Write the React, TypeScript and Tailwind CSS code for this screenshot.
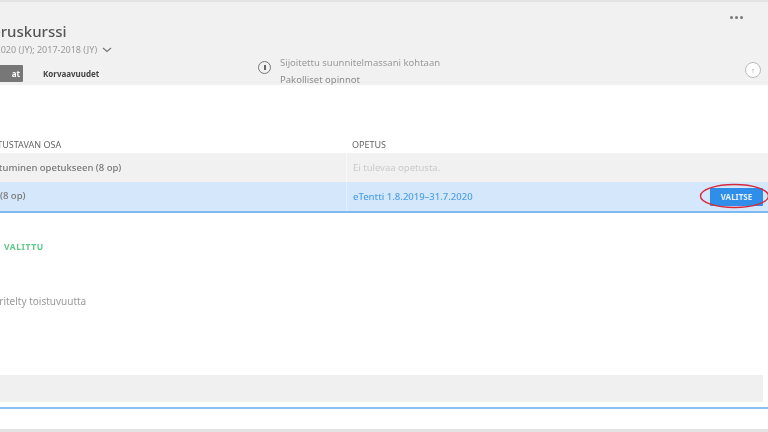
export default function App() {
  return (
    <div className="w-[768px] h-[432px] overflow-hidden bg-white font-['Noto_Sans',sans-serif] blur-[0.5px]">
      <div className="h-[2px] bg-[#e3e3e3]" />

      {/* course header */}
      <div className="h-[83px] bg-[#f1f1f1] flex overflow-hidden">
        <div className="w-[258px] shrink-0 overflow-hidden pt-[19px]">
          <div className="ml-[-17px] text-[15px] leading-[20px] font-medium text-[#555] whitespace-nowrap">Peruskurssi</div>
          <div className="ml-[-28px] mt-[2px] flex items-center gap-[5px] text-[9px] leading-[14px] text-[#9a9a9a] whitespace-nowrap">
            2019-2020 (JY); 2017-2018 (JY)
            <svg width="10" height="6" viewBox="0 0 10 6" fill="none" stroke="#777" strokeWidth="1.2">
              <path d="M1 1l4 3.5L9 1" />
            </svg>
          </div>
          <div className="mt-[8px] flex items-end">
            <div className="w-[23px] h-[17px] bg-[#777] rounded-r-[1px] pr-[3px] text-right text-[8px] leading-[17px] font-bold text-white">at</div>
            <div className="ml-[20px] h-[17px] text-[8px] leading-[17px] font-bold text-[#444] whitespace-nowrap">Korvaavuudet</div>
          </div>
        </div>

        <div className="w-[22px] shrink-0 pt-[59px]">
          <div className="w-[13px] h-[13px] rounded-full border border-[#777] flex items-center justify-center">
            <div className="w-[2px] h-[5px] bg-[#666]" />
          </div>
        </div>

        <div className="flex-1 pt-[54px] text-[9.5px] leading-[14px] text-[#9a9a9a] whitespace-nowrap">
          <div>Sijoitettu suunnitelmassani kohtaan</div>
          <div className="mt-[3px] w-fit border-b border-[#7db4e6] text-[#8c8c8c]">Pakolliset opinnot</div>
        </div>

        <div className="w-[38px] shrink-0 flex flex-col items-start">
          <div className="mt-[14px] flex gap-[2px]">
            <div className="w-[3px] h-[3px] rounded-full bg-[#777]" />
            <div className="w-[3px] h-[3px] rounded-full bg-[#777]" />
            <div className="w-[3px] h-[3px] rounded-full bg-[#777]" />
          </div>
          <div className="mt-[43px] ml-[15px] w-[16px] h-[16px] rounded-full bg-white border border-[#bbb] flex items-center justify-center text-[7px] leading-none text-[#888]">↑</div>
        </div>
      </div>

      {/* table */}
      <div className="mt-[52px] grid grid-cols-[347px_1fr] h-[16px] text-[9px] leading-[16px] text-[#666]">
        <div className="overflow-hidden whitespace-nowrap"><span className="ml-[-31px] block">TOTEUTUSTAVAN OSA</span></div>
        <div className="pl-[5px]">OPETUS</div>
      </div>
      <div className="grid grid-cols-[347px_1fr] h-[29px] bg-[#f1f1f1] text-[9.5px] leading-[29px]">
        <div className="overflow-hidden whitespace-nowrap border-r border-[#f8f8f8] font-medium text-[#777]"><span className="ml-[-31px] block">Osallistuminen opetukseen (8 op)</span></div>
        <div className="pl-[6px] text-[#c9c9c9]">Ei tulevaa opetusta.</div>
      </div>
      <div className="relative h-[31px] bg-[#d5e7fa] border-b-2 border-[#7fb9f2] grid grid-cols-[347px_1fr] text-[9.5px] leading-[28px]">
        <div className="overflow-hidden whitespace-nowrap border-r border-[#e4effb] font-medium text-[#777]">(8 op)</div>
        <div className="pl-[6px] pr-[5px] flex items-center justify-between font-medium text-[#4d9fe8]">
          <span>eTentti 1.8.2019–31.7.2020</span>
          <div className="w-[53px] h-[18px] bg-[#2f8eea] rounded-[1px] text-center text-[8px] leading-[18px] font-bold text-[#e3f0fc]">VALITSE</div>
        </div>
        {/* red marking over the button */}
        <svg className="absolute left-[698px] top-[0px]" width="70" height="29" viewBox="0 0 70 29" fill="none" stroke="#d8283a" strokeWidth="1.4">
          <ellipse cx="36.5" cy="14" rx="34" ry="11.5" />
        </svg>
      </div>

      {/* details */}
      <div className="mt-[27px] pl-[4px] text-[8.5px] leading-[14px] font-bold tracking-[0.6px] text-[#5fc88a]">VALITTU</div>
      <div className="mt-[40px] overflow-hidden whitespace-nowrap text-[10px] leading-[14px] text-[#9a9a9a]">
        <span className="ml-[-21px] block">Määritelty toistuvuutta</span>
      </div>

      <div className="mt-[67px] mr-[5px] h-[27px] bg-[#f0f0f0]" />
      <div className="mt-[5px] h-[2px] bg-[#8cbff2]" />
      <div className="mt-[20px] h-[3px] bg-[#e3e3e3]" />
    </div>
  );
}
